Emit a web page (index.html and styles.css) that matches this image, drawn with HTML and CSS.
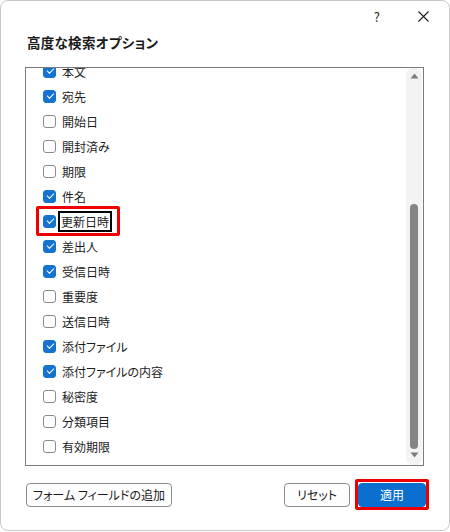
FILE: index.html
```html
<!DOCTYPE html>
<html lang="ja">
<head>
<meta charset="utf-8">
<title>高度な検索オプション</title>
<link rel="stylesheet" href="styles.css">
</head>
<body>
<div class="dialog">
  <div class="titlebar">
    <span class="help">?</span>
    <span class="close">
      <svg width="11" height="11" viewBox="0 0 11 11"><path d="M0.5 0.5 L10.5 10.5 M10.5 0.5 L0.5 10.5" stroke="#1b1b1b" stroke-width="1.1" fill="none"/></svg>
    </span>
  </div>
  <h1 class="heading">高度な検索オプション</h1>
  <div class="listbox">
    <div class="items">
      <div class="row"><span class="cb on"></span><span class="label">本文</span></div>
      <div class="row"><span class="cb on"></span><span class="label">宛先</span></div>
      <div class="row"><span class="cb"></span><span class="label">開始日</span></div>
      <div class="row"><span class="cb"></span><span class="label">開封済み</span></div>
      <div class="row"><span class="cb"></span><span class="label">期限</span></div>
      <div class="row"><span class="cb on"></span><span class="label">件名</span></div>
      <div class="row marked"><span class="cb on"></span><span class="label focus">更新日時</span></div>
      <div class="row"><span class="cb on"></span><span class="label">差出人</span></div>
      <div class="row"><span class="cb on"></span><span class="label">受信日時</span></div>
      <div class="row"><span class="cb"></span><span class="label">重要度</span></div>
      <div class="row"><span class="cb"></span><span class="label">送信日時</span></div>
      <div class="row"><span class="cb on"></span><span class="label">添付ファイル</span></div>
      <div class="row"><span class="cb on"></span><span class="label">添付ファイルの内容</span></div>
      <div class="row"><span class="cb"></span><span class="label">秘密度</span></div>
      <div class="row"><span class="cb"></span><span class="label">分類項目</span></div>
      <div class="row"><span class="cb"></span><span class="label">有効期限</span></div>
    </div>
    <div class="scrollbar">
      <svg class="arrow" width="9" height="6" viewBox="0 0 9 6"><path d="M4.5 0.5 L8.5 5.5 L0.5 5.5 Z" fill="#7d7d7d"/></svg>
      <div class="track"><div class="thumb"></div></div>
      <svg class="arrow" width="9" height="6" viewBox="0 0 9 6"><path d="M0.5 0.5 L8.5 0.5 L4.5 5.5 Z" fill="#7d7d7d"/></svg>
    </div>
  </div>
  <div class="buttons">
    <button class="btn">フォーム フィールドの追加</button>
    <span class="spacer"></span>
    <button class="btn">リセット</button>
    <button class="btn primary marked-btn">適用</button>
  </div>
</div>
</body>
</html>
```
FILE: styles.css
```css
html, body {
  margin: 0;
  padding: 0;
  background: #ffffff;
}
body {
  font-family: "Noto Sans CJK JP", "Noto Sans", sans-serif;
  font-feature-settings: "palt";
  color: #1b1b1b;
}
.dialog {
  box-sizing: border-box;
  width: 450px;
  height: 531px;
  border: 1px solid #c9c9c9;
  border-radius: 8px;
  background: #ffffff;
  padding: 0 25px 0 24px;
  display: flex;
  flex-direction: column;
}
.titlebar {
  height: 30px;
  display: flex;
  align-items: center;
  justify-content: flex-end;
  margin-right: -5px;
}
.help {
  font-size: 13px;
  line-height: 14px;
  margin-right: 38px;
  margin-top: 1px;
}
.close {
  display: flex;
  width: 11px;
  height: 11px;
  margin-top: 1px;
}
.heading {
  margin: 1px 0 0 2px;
  font-size: 13.5px;
  line-height: 20px;
  font-weight: bold;
  letter-spacing: 0.3px;
}
.listbox {
  margin-top: 15px;
  height: 399px;
  box-sizing: border-box;
  border: 1px solid #7a7a7a;
  display: flex;
  overflow: hidden;
}
.items {
  flex: 1;
  margin-top: -9px;
  position: relative;
}
.row {
  height: 25px;
  display: flex;
  align-items: center;
  padding-left: 17px;
  font-size: 12px;
  position: relative;
}
.cb {
  box-sizing: border-box;
  width: 13px;
  height: 13px;
  border: 1px solid #8a8a8a;
  border-radius: 3px;
  background: #fff;
  margin-right: 5px;
  flex: none;
  position: relative;
}
.cb.on {
  border-color: #1573cf;
  background: #1573cf;
}
.cb.on::after {
  content: "";
  position: absolute;
  left: 3px;
  top: 2px;
  width: 6px;
  height: 3px;
  border-left: 1.5px solid #fff;
  border-bottom: 1.5px solid #fff;
  transform: rotate(-45deg);
}
.label {
  line-height: 17px;
  padding: 0 1px;
}
.label.focus {
  outline: 2px solid #000;
  outline-offset: 0;
  margin-left: -1px;
}
.row.marked::before {
  content: "";
  position: absolute;
  left: 10px;
  top: -3px;
  width: 84px;
  height: 30px;
  box-sizing: border-box;
  border: 3px solid #ee0000;
  border-radius: 2px;
}
.scrollbar {
  width: 16px;
  margin: 0 1px 0 0;
  background: #f3f3f3;
  border-radius: 7px;
  display: flex;
  flex-direction: column;
  align-items: center;
  padding: 5px 0 7px;
  box-sizing: border-box;
}
.arrow {
  flex: none;
}
.track {
  flex: 1;
  width: 100%;
  display: flex;
  flex-direction: column;
  justify-content: flex-end;
  align-items: center;
  padding: 0 0 3px;
}
.thumb {
  width: 8px;
  height: 245px;
  background: #858585;
  border-radius: 4px;
}
.buttons {
  margin-top: 17px;
  margin-right: -2px;
  display: flex;
  align-items: center;
  gap: 8px;
  padding-left: 1px;
}
.spacer {
  flex: 1;
}
.btn {
  font-family: "Noto Sans CJK JP", "Noto Sans", sans-serif;
  font-feature-settings: "palt";
  font-size: 12px;
  height: 24px;
  box-sizing: border-box;
  border: 1px solid #8c8c8c;
  border-radius: 4px;
  background: #fdfdfd;
  color: #1b1b1b;
  padding: 0 8px;
  line-height: 20px;
  position: relative;
}
.btn:first-child {
  width: 146px;
  padding: 0 4px;
}
.btn:nth-child(3) {
  width: 66px;
}
.btn.primary {
  width: 68px;
  background: #0a6fcf;
  border-color: #0a6fcf;
  color: #ffffff;
}
.marked-btn::after {
  content: "";
  position: absolute;
  left: -4px;
  top: -5px;
  right: -4px;
  bottom: -4px;
  border: 3px solid #ee0000;
  border-radius: 2px;
}
```
